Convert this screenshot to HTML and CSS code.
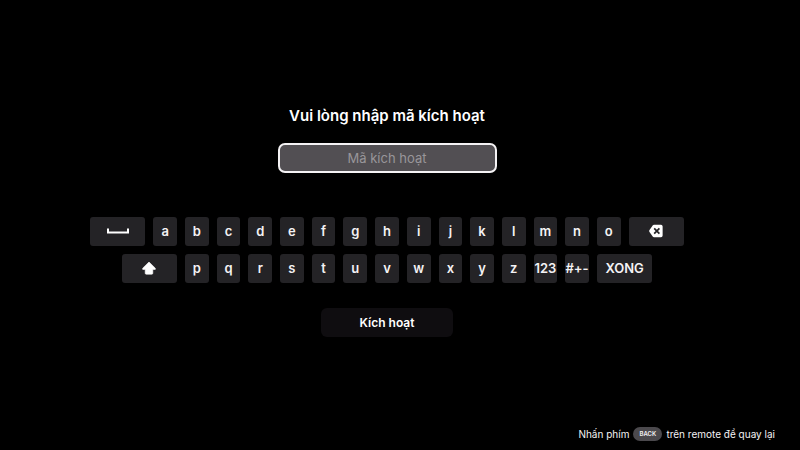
FILE: index.html
```html
<!DOCTYPE html>
<html lang="vi">
<head>
    <meta charset="UTF-8">
    <meta name="viewport" content="width=device-width, initial-scale=1.0">
    <title>Mã kích hoạt</title>
    <link rel="stylesheet" href="styles.css">
</head>
<body>

    <main class="activate">
        <label class="title" for="code">Vui lòng nhập mã kích hoạt</label>
        <input type="text" id="code" class="code" placeholder="Mã kích hoạt">

        <div class="keyboard">
            <button class="key wide" aria-label="Dấu cách">
                <svg width="24" height="8" viewBox="0 0 24 8"><path d="M2 1.5V5.5H22V1.5" fill="none" stroke="#fff" stroke-width="2"/></svg>
            </button>
            <button class="key">a</button>
            <button class="key">b</button>
            <button class="key">c</button>
            <button class="key">d</button>
            <button class="key">e</button>
            <button class="key">f</button>
            <button class="key">g</button>
            <button class="key">h</button>
            <button class="key">i</button>
            <button class="key">j</button>
            <button class="key">k</button>
            <button class="key">l</button>
            <button class="key">m</button>
            <button class="key">n</button>
            <button class="key">o</button>
            <button class="key wide" aria-label="Xóa">
                <svg width="14" height="14" viewBox="0 0 14 14"><path d="M5 .8H12Q13.6 .8 13.6 2.4V11.6Q13.6 13.2 12 13.2H5Q4.2 13.2 3.7 12.5L.5 8Q-.1 7 .5 6L3.7 1.5Q4.2 .8 5 .8Z" fill="#fff"/><path d="M5.2 4.4L10.4 9.6M10.4 4.4L5.2 9.6" stroke="#242326" stroke-width="1.7"/></svg>
            </button>

            <button class="key wide shift" aria-label="Viết hoa">
                <svg width="14" height="14" viewBox="0 0 14 14"><path d="M7 1L13.3 7.2V8.4H10.8V12.2Q10.8 13.2 9.8 13.2H4.2Q3.2 13.2 3.2 12.2V8.4H.7V7.2Z" fill="#fff" stroke="#fff" stroke-width=".6" stroke-linejoin="round"/></svg>
            </button>
            <button class="key">p</button>
            <button class="key">q</button>
            <button class="key">r</button>
            <button class="key">s</button>
            <button class="key">t</button>
            <button class="key">u</button>
            <button class="key">v</button>
            <button class="key">w</button>
            <button class="key">x</button>
            <button class="key">y</button>
            <button class="key">z</button>
            <button class="key">123</button>
            <button class="key">#+-</button>
            <button class="key wide">XONG</button>
        </div>

        <button class="submit">Kích hoạt</button>
    </main>

    <footer class="hint">
        Nhấn phím <span class="back">BACK</span> trên remote để quay lại
    </footer>

</body>
</html>
```
FILE: styles.css
```css
* {
    box-sizing: border-box;
}
body {
    margin: 0;
    min-height: 100vh;
    display: flex;
    flex-direction: column;
    background-color: #000;
    color: #fff;
    font-family: Inter, "Noto Sans", sans-serif;
}
button, input {
    font-family: inherit;
}
.activate {
    flex: 1;
    display: flex;
    flex-direction: column;
    align-items: center;
    justify-content: center;
    padding: 24px 26px 0 0;
}
.title {
    font-size: 15px;
    font-weight: 600;
    line-height: 20px;
    margin-bottom: 17px;
}
.code {
    width: 219px;
    height: 30px;
    padding: 0 8px;
    background-color: #524f53;
    border: 2px solid #f4f2f4;
    border-radius: 7px;
    color: #fff;
    font-size: 13px;
    text-align: center;
    outline: none;
}
.code::placeholder {
    color: #99969a;
    opacity: 1;
}
.keyboard {
    display: grid;
    grid-template-columns: repeat(19, 1fr);
    grid-auto-rows: 29px;
    gap: 8px;
    width: 100%;
    max-width: 594px;
    margin: 44px 0 25px;
}
.key {
    display: flex;
    align-items: center;
    justify-content: center;
    min-width: 0;
    padding: 0;
    background-color: #242326;
    border: none;
    border-radius: 3px;
    color: #f4f2f4;
    font-size: 13px;
    font-weight: 600;
    cursor: pointer;
}
.wide {
    grid-column: span 2;
}
.shift {
    grid-column: 2 / span 2;
}
.submit {
    width: 132px;
    height: 29px;
    padding: 0;
    background-color: #0f0d10;
    border: none;
    border-radius: 6px;
    color: #fff;
    font-size: 12px;
    font-weight: 600;
    cursor: pointer;
}
.hint {
    display: flex;
    align-items: center;
    justify-content: flex-end;
    gap: 4px;
    height: 32px;
    padding: 0 25px;
    color: #f4f2f4;
    font-size: 10px;
}
.back {
    width: 29px;
    border-radius: 7px;
    background-color: #4b494d;
    font-size: 6px;
    font-weight: 600;
    line-height: 14px;
    text-align: center;
}
```
